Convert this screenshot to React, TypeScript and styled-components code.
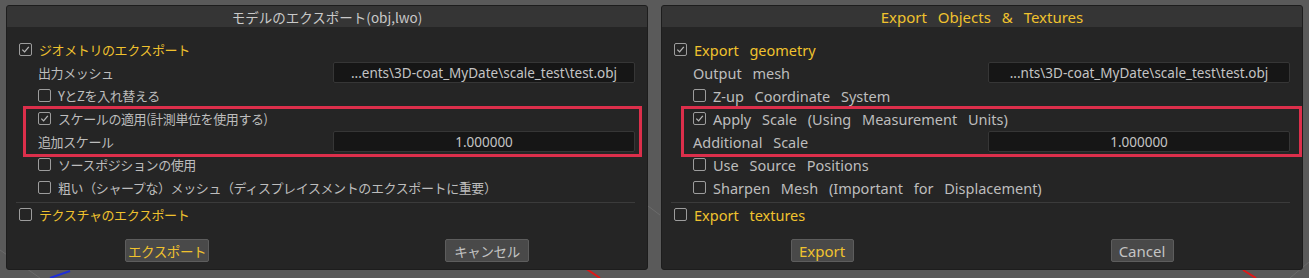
import React from 'react';
import styled, { createGlobalStyle } from 'styled-components';

const GlobalStyle = createGlobalStyle`
  html, body {
    margin: 0;
    padding: 0;
    background: #5a5a5a;
  }
`;

const JP = `"Noto Sans CJK JP", "Noto Sans", sans-serif`;
const EN = `"Noto Sans", "Open Sans", sans-serif`;

const Viewport = styled.div`
  position: relative;
  width: 1309px;
  height: 278px;
  box-sizing: border-box;
  padding: 5px 6px 8px;
  display: flex;
  gap: 13px;
  overflow: hidden;
  background: #5a5a5a;
`;

const Backdrop = styled.svg`
  position: absolute;
  inset: 0;
  pointer-events: none;
`;

const Dialog = styled.section<{ $en?: boolean }>`
  position: relative;
  width: 642px;
  height: 265px;
  box-sizing: border-box;
  display: flex;
  flex-direction: column;
  background: #252525;
  border: 1px solid #1d1d1d;
  border-radius: 3px;
  overflow: hidden;
  font-family: ${p => (p.$en ? EN : JP)};
  font-size: ${p => (p.$en ? '14.5px' : '13px')};
  letter-spacing: ${p => (p.$en ? '0' : '-0.4px')};
  word-spacing: ${p => (p.$en ? '7px' : '0')};
  color: #bdbdbd;
`;

const TitleBar = styled.header<{ $en?: boolean }>`
  height: 21px;
  flex: none;
  display: flex;
  align-items: center;
  justify-content: center;
  background: #353535;
  font-size: ${p => (p.$en ? '15px' : '13.5px')};
  letter-spacing: 0;
  color: ${p => (p.$en ? '#f0c22e' : '#c9c9c9')};
`;

const Body = styled.div`
  padding: 11px 12px 0;
  display: flex;
  flex-direction: column;
`;

const Row = styled.div<{ $indent?: boolean; $accent?: boolean }>`
  height: 23px;
  display: flex;
  align-items: center;
  gap: 7px;
  padding-left: ${p => (p.$indent ? '19px' : '0')};
  white-space: nowrap;
  color: ${p => (p.$accent ? '#f0c22e' : '#bdbdbd')};
`;

const FieldRow = styled.div`
  height: 23px;
  display: grid;
  grid-template-columns: 1fr 302px;
  align-items: center;
  padding-left: 19px;
  white-space: nowrap;
`;

const Field = styled.div`
  height: 21px;
  box-sizing: border-box;
  display: flex;
  align-items: center;
  justify-content: center;
  background: #161616;
  border: 1px solid #363636;
  border-radius: 2px;
  font-family: ${EN};
  letter-spacing: 0;
  word-spacing: 0;
  font-size: 13.5px;
  color: #c4c4c4;
  overflow: hidden;
`;

const Highlight = styled.div<{ $left: number; $right: number }>`
  position: relative;

  &::after {
    content: '';
    position: absolute;
    top: -1px;
    bottom: -4px;
    left: ${p => p.$left}px;
    right: ${p => p.$right}px;
    border: 3px solid #dc2f4b;
    pointer-events: none;
  }
`;

const Divider = styled.hr`
  margin: 3px 0 0 -3px;
  border: none;
  border-top: 1px solid #3b3b3b;
  height: 0;
`;

const Actions = styled.div`
  margin: 13px -12px 0;
  display: grid;
  grid-template-columns: 1fr 1fr;
  justify-items: center;
`;

const Button = styled.button<{ $accent?: boolean; $en?: boolean }>`
  width: ${p => (p.$en ? 63 : 84)}px;
  height: 23px;
  padding: 0;
  background: #494949;
  border: 1px solid #5d5d5d;
  border-radius: 2px;
  font-family: inherit;
  font-size: ${p => (p.$en ? '15px' : '13.5px')};
  letter-spacing: inherit;
  white-space: nowrap;
  color: ${p => (p.$accent ? '#f0c22e' : '#c4c4c4')};
`;

const Box = styled.span`
  width: 13px;
  height: 13px;
  box-sizing: border-box;
  flex: none;
  border: 1.5px solid #9d9d9d;
  border-radius: 2px;
  display: inline-flex;
  align-items: center;
  justify-content: center;
`;

function Check({ on }: { on?: boolean }) {
  return (
    <Box>
      {on && (
        <svg width="9" height="9" viewBox="0 0 9 9">
          <polyline points="1.3,4.6 3.6,6.9 7.8,1.8" fill="none" stroke="#b5b5b5" strokeWidth="1.3" />
        </svg>
      )}
    </Box>
  );
}

interface Texts {
  title: string;
  geometry: string;
  output: string;
  path: string;
  swap: string;
  apply: string;
  extra: string;
  source: string;
  sharpen: string;
  textures: string;
  ok: string;
  cancel: string;
}

const ja: Texts = {
  title: 'モデルのエクスポート(obj,lwo)',
  geometry: 'ジオメトリのエクスポート',
  output: '出力メッシュ',
  path: '...ents\\3D-coat_MyDate\\scale_test\\test.obj',
  swap: 'YとZを入れ替える',
  apply: 'スケールの適用(計測単位を使用する)',
  extra: '追加スケール',
  source: 'ソースポジションの使用',
  sharpen: '粗い（シャープな）メッシュ（ディスプレイスメントのエクスポートに重要）',
  textures: 'テクスチャのエクスポート',
  ok: 'エクスポート',
  cancel: 'キャンセル',
};

const en: Texts = {
  title: 'Export Objects & Textures',
  geometry: 'Export geometry',
  output: 'Output mesh',
  path: '...nts\\3D-coat_MyDate\\scale_test\\test.obj',
  swap: 'Z-up Coordinate System',
  apply: 'Apply Scale (Using Measurement Units)',
  extra: 'Additional Scale',
  source: 'Use Source Positions',
  sharpen: 'Sharpen Mesh (Important for Displacement)',
  textures: 'Export textures',
  ok: 'Export',
  cancel: 'Cancel',
};

function ExportDialog({ t, english }: { t: Texts; english?: boolean }) {
  return (
    <Dialog $en={english}>
      <TitleBar $en={english}>{t.title}</TitleBar>
      <Body>
        <Row $accent>
          <Check on />
          {t.geometry}
        </Row>
        <FieldRow>
          <span>{t.output}</span>
          <Field>{t.path}</Field>
        </FieldRow>
        <Row $indent>
          <Check />
          {t.swap}
        </Row>
        <Highlight $left={english ? 7 : 4} $right={english ? -12 : -7}>
          <Row $indent>
            <Check on />
            {t.apply}
          </Row>
          <FieldRow>
            <span>{t.extra}</span>
            <Field>1.000000</Field>
          </FieldRow>
        </Highlight>
        <Row $indent>
          <Check />
          {t.source}
        </Row>
        <Row $indent>
          <Check />
          {t.sharpen}
        </Row>
        <Divider />
        <Row $accent>
          <Check />
          {t.textures}
        </Row>
        <Actions>
          <Button $accent $en={english}>{t.ok}</Button>
          <Button $en={english}>{t.cancel}</Button>
        </Actions>
      </Body>
    </Dialog>
  );
}

export default function App() {
  return (
    <>
      <GlobalStyle />
      <Viewport>
        <Backdrop width="1309" height="278">
          <g stroke="#6a6a6a" strokeWidth="1">
            <line x1="0" y1="250" x2="40" y2="278" />
            <line x1="640" y1="200" x2="660" y2="215" />
            <line x1="1290" y1="278" x2="1309" y2="262" />
          </g>
          <line x1="50" y1="278" x2="70" y2="271" stroke="#1e2fd8" strokeWidth="2" />
          <line x1="585" y1="268" x2="600" y2="278" stroke="#e01818" strokeWidth="2" />
          <line x1="1243" y1="270" x2="1256" y2="278" stroke="#e01818" strokeWidth="2" />
        </Backdrop>
        <ExportDialog t={ja} />
        <ExportDialog t={en} english />
      </Viewport>
    </>
  );
}
